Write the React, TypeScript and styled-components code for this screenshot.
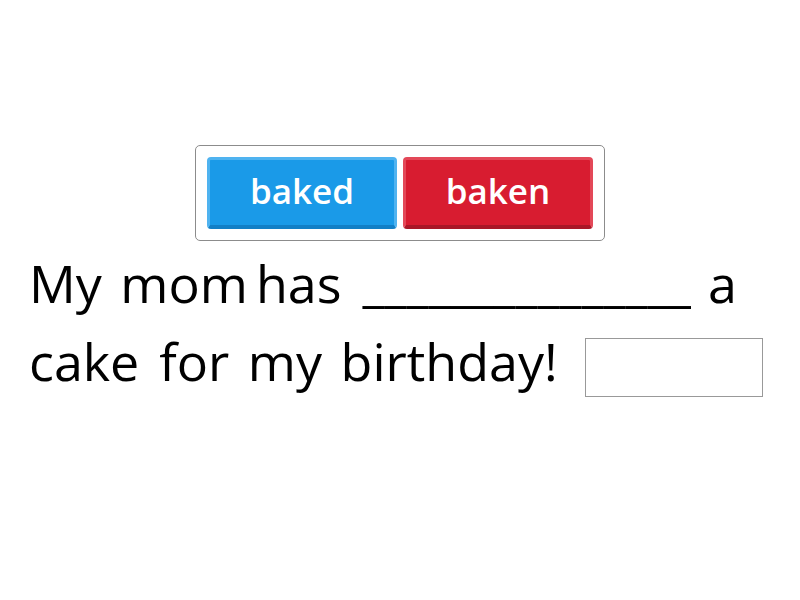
import React from "react";
import styled, { createGlobalStyle } from "styled-components";

const Global = createGlobalStyle`
  html, body { margin: 0; padding: 0; background: #fff; }
  body { font-family: "Open Sans", sans-serif; }
`;

const Page = styled.div`
  width: 800px;
  height: 600px;
  display: flex;
  flex-direction: column;
  align-items: center;
  padding-top: 145px;
  box-sizing: border-box;
`;

const Tray = styled.div`
  width: 410px;
  height: 96px;
  box-sizing: border-box;
  border: 1px solid #8c8c8c;
  border-radius: 5px;
  display: flex;
  gap: 6px;
  padding: 11px 11px 0 11px;
`;

const Chip = styled.div<{ $bg: string; $light: string; $dark: string }>`
  width: 190px;
  height: 72px;
  box-sizing: border-box;
  border-radius: 4px;
  background: ${(p) => p.$bg};
  border-top: 3px solid ${(p) => p.$light};
  border-left: 3px solid ${(p) => p.$light};
  border-right: 3px solid ${(p) => p.$light};
  border-bottom: 4px solid ${(p) => p.$dark};
  color: #fff;
  font-weight: 600;
  font-size: 35px;
  display: flex;
  align-items: center;
  justify-content: center;
  padding-bottom: 4px;
`;

const Sentence = styled.div`
  width: 744px;
  display: flex;
  flex-wrap: wrap;
  align-items: center;
  font-size: 52px;
  word-spacing: 5px;
  color: #000;
  line-height: 78px;
  margin-top: 3px;
  padding-left: 1px;
  box-sizing: border-box;
`;

const Word = styled.span<{ $gap: number }>`
  margin-right: ${(p) => p.$gap}px;
  white-space: nowrap;
`;

const Line = styled.span`
  font-size: 50px;
  margin-right: 17px;
  white-space: nowrap;
`;

const Blank = styled.input`
  width: 178px;
  height: 59px;
  box-sizing: border-box;
  border: 1px solid #999;
  margin-left: 27px;
  margin-top: 13px;
  outline: none;
`;

export default function App() {
  return (
    <>
      <Global />
      <Page>
        <Tray>
          <Chip $bg="#1a9ae8" $light="#4fb3f0" $dark="#127fc6">baked</Chip>
          <Chip $bg="#d81c30" $light="#e34858" $dark="#a91727">baken</Chip>
        </Tray>
        <Sentence>
          <Word $gap={8}>My mom</Word>
          <Word $gap={21}>has</Word>
          <Line>_______________</Line>
          <Word $gap={0}>a</Word>
          <Word $gap={20}>cake</Word>
          <Word $gap={0}>for my birthday!</Word>
          <Blank />
        </Sentence>
      </Page>
    </>
  );
}
